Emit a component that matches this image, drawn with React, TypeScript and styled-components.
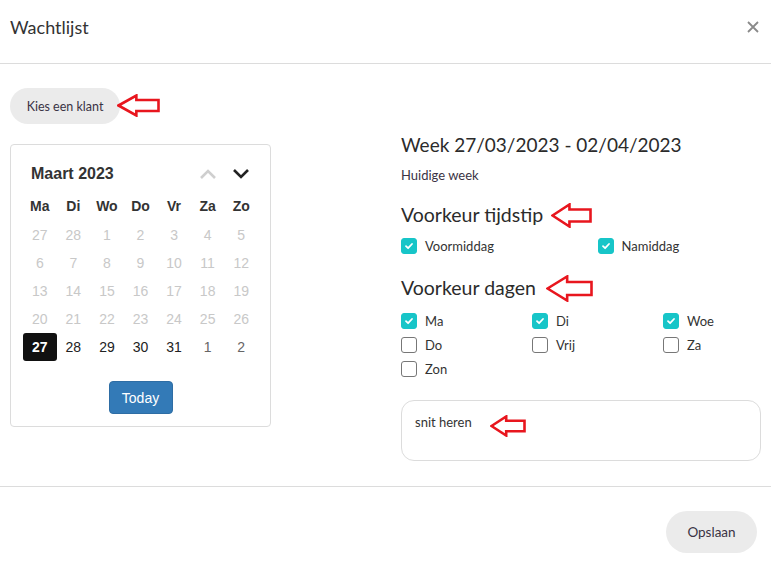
import React from "react";
import styled, { createGlobalStyle } from "styled-components";

const Global = createGlobalStyle`
  html, body { margin: 0; padding: 0; background: #fff; }
  body { font-family: "Lato", "Noto Sans", sans-serif; color: #333; }
  * { box-sizing: border-box; }
`;

const Modal = styled.div`
  width: 771px;
  height: 569px;
  display: flex;
  flex-direction: column;
  background: #fff;
`;

const Header = styled.div`
  height: 64px;
  border-bottom: 1px solid #dcdcdc;
  display: flex;
  align-items: center;
  justify-content: space-between;
  padding: 0 10px 10px 10px;
`;

const Title = styled.h1`
  margin: 0;
  font-size: 18px;
  font-weight: 400;
  color: #333;
`;

const Close = styled.button`
  border: 0;
  background: none;
  padding: 0;
  width: 16px;
  height: 16px;
  display: flex;
  align-items: center;
  justify-content: center;
  color: #888;
`;

const Body = styled.div`
  height: 423px;
  border-bottom: 1px solid #dcdcdc;
  padding: 24px 10px 0 10px;
`;

const PickRow = styled.div`
  display: flex;
  align-items: center;
`;

const PillButton = styled.button<{ $h: number; $w: number }>`
  border: 0;
  background: #ebebeb;
  border-radius: ${(p) => p.$h / 2}px;
  height: ${(p) => p.$h}px;
  width: ${(p) => p.$w}px;
  font-family: "Lato", "Noto Sans", sans-serif;
  font-size: ${(p) => (p.$h > 38 ? 13.5 : 12.5)}px;
  color: #3a3344;
  padding: 0;
`;

const Columns = styled.div`
  display: flex;
  align-items: flex-start;
`;

const Card = styled.div`
  margin-top: 20px;
  width: 261px;
  border: 1px solid #dcdcdc;
  border-radius: 4px;
  padding: 15px 12px 12px 12px;
  font-family: "Liberation Sans", Arial, sans-serif;
  display: flex;
  flex-direction: column;
  align-items: center;
`;

const Grid = styled.div`
  width: 235px;
  display: grid;
  grid-template-columns: repeat(7, 1fr);
  grid-auto-rows: 28px;
`;

const MonthTitle = styled.div`
  grid-column: span 5;
  display: flex;
  align-items: center;
  padding-left: 8px;
  font-size: 16px;
  font-weight: 700;
  color: #333;
`;

const Nav = styled.div<{ $dim?: boolean }>`
  display: flex;
  align-items: center;
  justify-content: center;
  color: ${(p) => (p.$dim ? "#cfcfcf" : "#222")};
`;

const WeekHead = styled.div`
  width: 235px;
  margin-top: 4px;
  margin-bottom: 1px;
  display: grid;
  grid-template-columns: repeat(7, 1fr);
  grid-auto-rows: 28px;
`;

const Wd = styled.div`
  display: flex;
  align-items: center;
  justify-content: center;
  font-size: 14px;
  font-weight: 700;
  color: #333;
`;

const Day = styled.div<{ $tone: "old" | "cur" | "next" | "sel" }>`
  display: flex;
  align-items: center;
  justify-content: center;
  font-size: 14px;
  border-radius: 3px;
  color: ${(p) =>
    p.$tone === "old" ? "#c8c8c8" : p.$tone === "next" ? "#666" : p.$tone === "sel" ? "#fff" : "#222"};
  background: ${(p) => (p.$tone === "sel" ? "#111" : "transparent")};
  font-weight: ${(p) => (p.$tone === "sel" ? 700 : 400)};
`;

const TodayBtn = styled.button`
  margin-top: 20px;
  width: 64px;
  height: 33px;
  background: #337ab7;
  border: 1px solid #2e6da4;
  border-radius: 4px;
  color: #fff;
  font-family: "Liberation Sans", Arial, sans-serif;
  font-size: 14px;
  padding: 0;
`;

const Right = styled.div`
  margin-left: 130px;
  padding-top: 9px;
  width: 360px;
  display: flex;
  flex-direction: column;
`;

const WeekTitle = styled.div`
  font-size: 19px;
  line-height: 24px;
  color: #2b2b2b;
  white-space: nowrap;
`;

const Sub = styled.div`
  margin-top: 10px;
  font-size: 13px;
  line-height: 16px;
  color: #3a3344;
`;

const Section = styled.div<{ $mt: number }>`
  margin-top: ${(p) => p.$mt}px;
  height: 22px;
  display: flex;
  align-items: center;
  font-size: 19.5px;
  line-height: 22px;
  color: #2b2b2b;
`;

const Checks = styled.div<{ $cols: number; $mt: number }>`
  margin-top: ${(p) => p.$mt}px;
  width: 393px;
  display: grid;
  grid-template-columns: repeat(${(p) => p.$cols}, 1fr);
  grid-auto-rows: ${(p) => (p.$cols === 2 ? 18 : 24)}px;
`;

const CheckItem = styled.label`
  display: flex;
  align-items: center;
  gap: 8px;
  font-size: 13px;
  color: #333;
`;

const Box = styled.span<{ $on: boolean }>`
  width: 16px;
  height: 16px;
  border-radius: 3px;
  display: flex;
  align-items: center;
  justify-content: center;
  background: ${(p) => (p.$on ? "#17c5c8" : "#fff")};
  border: 1px solid ${(p) => (p.$on ? "#17c5c8" : "#777")};
`;

const Note = styled.div`
  margin-top: 19px;
  width: 360px;
  height: 61px;
  border: 1px solid #dcdcdc;
  border-radius: 13px;
  padding: 13px 13px;
  display: flex;
  align-items: flex-start;
  font-size: 13px;
  line-height: 16px;
  color: #333;
`;

const NoteLine = styled.div`
  height: 16px;
  display: flex;
  align-items: center;
`;

const ArrowWrap = styled.span<{ $ml: number; $dy: number }>`
  display: inline-flex;
  align-items: center;
  height: 0;
  overflow: visible;
  margin-left: ${(p) => p.$ml}px;
  position: relative;
  top: ${(p) => p.$dy}px;
`;

const Footer = styled.div`
  flex: 1;
  display: flex;
  justify-content: flex-end;
  align-items: flex-start;
  padding: 24px 14px 0 0;
`;

function Arrow({ w, h, ml, dy = 0 }: { w: number; h: number; ml: number; dy?: number }) {
  const hb = w * 0.45;
  const t = h * 0.26;
  return (
    <ArrowWrap $ml={ml} $dy={dy}>
      <svg width={w} height={h} viewBox={`0 0 ${w} ${h}`} style={{ flexShrink: 0 }}>
        <path
          d={`M1.5 ${h / 2} L${hb} 1.5 L${hb} ${t} L${w - 1.5} ${t} L${w - 1.5} ${h - t} L${hb} ${h - t} L${hb} ${h - 1.5} Z`}
          fill="none"
          stroke="#e8161e"
          strokeWidth="2.6"
          strokeLinejoin="miter"
        />
      </svg>
    </ArrowWrap>
  );
}

function Tick() {
  return (
    <svg width="10" height="10" viewBox="0 0 10 10">
      <path d="M2 5.2 L4.1 7.2 L8 3" fill="none" stroke="#fff" strokeWidth="1.8" strokeLinecap="round" strokeLinejoin="round" />
    </svg>
  );
}

function Check({ label, on }: { label: string; on: boolean }) {
  return (
    <CheckItem>
      <Box $on={on}>{on && <Tick />}</Box>
      {label}
    </CheckItem>
  );
}

const weekdays = ["Ma", "Di", "Wo", "Do", "Vr", "Za", "Zo"];
const days: { n: number; t: "old" | "cur" | "next" | "sel" }[] = [
  ...[27, 28, 1, 2, 3, 4, 5, 6, 7, 8, 9, 10, 11, 12, 13, 14, 15, 16, 17, 18, 19, 20, 21, 22, 23, 24, 25, 26].map(
    (n) => ({ n, t: "old" as const })
  ),
  { n: 27, t: "sel" },
  { n: 28, t: "cur" },
  { n: 29, t: "cur" },
  { n: 30, t: "cur" },
  { n: 31, t: "cur" },
  { n: 1, t: "next" },
  { n: 2, t: "next" },
];

export default function App() {
  return (
    <>
      <Global />
      <Modal>
        <Header>
          <Title>Wachtlijst</Title>
          <Close aria-label="close">
            <svg width="12" height="12" viewBox="0 0 12 12">
              <path d="M1 1 L11 11 M11 1 L1 11" stroke="#8a8a8a" strokeWidth="1.8" />
            </svg>
          </Close>
        </Header>
        <Body>
          <PickRow>
            <PillButton $h={36} $w={110}>Kies een klant</PillButton>
            <Arrow w={43} h={23} ml={-3} dy={-1} />
          </PickRow>
          <Columns>
            <Card>
              <Grid>
                <MonthTitle>Maart 2023</MonthTitle>
                <Nav $dim>
                  <svg width="18" height="12" viewBox="0 0 18 12">
                    <path d="M2 10 L9 3 L16 10" fill="none" stroke="currentColor" strokeWidth="2.6" />
                  </svg>
                </Nav>
                <Nav>
                  <svg width="18" height="12" viewBox="0 0 18 12">
                    <path d="M2 2 L9 9 L16 2" fill="none" stroke="currentColor" strokeWidth="2.6" />
                  </svg>
                </Nav>
              </Grid>
              <WeekHead>
                {weekdays.map((d) => (
                  <Wd key={d}>{d}</Wd>
                ))}
              </WeekHead>
              <Grid>
                {days.map((d, i) => (
                  <Day key={i} $tone={d.t}>
                    {d.n}
                  </Day>
                ))}
              </Grid>
              <TodayBtn>Today</TodayBtn>
            </Card>
            <Right>
              <WeekTitle>Week 27/03/2023 - 02/04/2023</WeekTitle>
              <Sub>Huidige week</Sub>
              <Section $mt={21}>
                Voorkeur tijdstip
                <Arrow w={41} h={25} ml={8} />
              </Section>
              <Checks $cols={2} $mt={11}>
                <Check label="Voormiddag" on />
                <Check label="Namiddag" on />
              </Checks>
              <Section $mt={22}>
                Voorkeur dagen
                <Arrow w={47} h={27} ml={10} />
              </Section>
              <Checks $cols={3} $mt={10}>
                <Check label="Ma" on />
                <Check label="Di" on />
                <Check label="Woe" on />
                <Check label="Do" on={false} />
                <Check label="Vrij" on={false} />
                <Check label="Za" on={false} />
                <Check label="Zon" on={false} />
              </Checks>
              <Note>
                <NoteLine>
                  snit heren
                  <Arrow w={36} h={22} ml={18} dy={4} />
                </NoteLine>
              </Note>
            </Right>
          </Columns>
        </Body>
        <Footer>
          <PillButton $h={42} $w={91}>Opslaan</PillButton>
        </Footer>
      </Modal>
    </>
  );
}
